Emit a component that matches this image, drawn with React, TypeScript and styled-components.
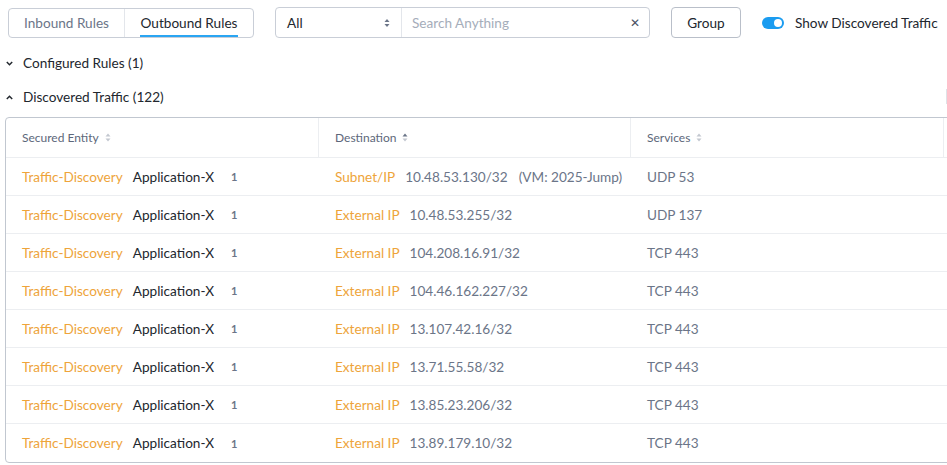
import React from "react";
import styled, { createGlobalStyle } from "styled-components";

const Global = createGlobalStyle`
  html, body { margin: 0; padding: 0; background: #fff; overflow: hidden; }
  body { font-family: Lato, "Open Sans", Arial, sans-serif; color: #22272e; }
  * { box-sizing: border-box; }
`;

const Page = styled.div`
  width: 1300px;
  padding: 7px 0 0 5px;
`;

const Toolbar = styled.div`
  display: flex;
  align-items: center;
  height: 31px;
  padding-left: 3px;
`;

const Tabs = styled.div`
  display: flex;
  height: 30px;
  margin-top: 1px;
  border: 1px solid #c9ced7;
  border-radius: 4px;
`;

const Tab = styled.div<{ $active?: boolean; $w: number }>`
  width: ${(p) => p.$w}px;
  display: flex;
  justify-content: center;
  align-items: center;
  font-size: 13.6px;
  color: ${(p) => (p.$active ? "#22272e" : "#6b7588")};
  border-left: ${(p) => (p.$active ? "1px solid #e3e6eb" : "none")};
  & > span {
    position: relative;
    height: 28px;
    line-height: 28px;
    padding: 0 1px;
  }
  & > span::after {
    content: "";
    display: ${(p) => (p.$active ? "block" : "none")};
    position: absolute;
    left: 0;
    right: 0;
    bottom: 0;
    height: 2px;
    background: #2aa5f2;
  }
`;

const SearchBox = styled.div`
  display: flex;
  margin-left: 21px;
  width: 375px;
  height: 31px;
  border: 1px solid #c9ced7;
  border-radius: 4px;
`;

const SelectPart = styled.div`
  width: 126px;
  display: flex;
  align-items: center;
  justify-content: space-between;
  padding: 0 11px 0 11px;
  font-size: 13.6px;
  color: #22272e;
  border-right: 1px solid #e3e6eb;
`;

const SearchPart = styled.div`
  flex: 1;
  display: flex;
  align-items: center;
  justify-content: space-between;
  padding: 0 9px 0 10px;
  font-size: 13.6px;
  color: #a5adba;
`;

const Clear = styled.span`
  font-size: 12px;
  color: #4a5263;
`;

const Button = styled.div`
  margin-left: 21px;
  width: 70px;
  height: 31px;
  border: 1px solid #b9bfc9;
  border-radius: 4px;
  display: flex;
  align-items: center;
  justify-content: center;
  font-size: 13.6px;
  color: #22272e;
`;

const ToggleWrap = styled.div`
  margin-left: 21px;
  display: flex;
  align-items: center;
  gap: 11px;
  font-size: 13.6px;
  color: #22272e;
`;

const Switch = styled.div`
  width: 22px;
  height: 12px;
  border-radius: 6px;
  background: #1b9cf0;
  position: relative;
  &::after {
    content: "";
    position: absolute;
    right: 2px;
    top: 2px;
    width: 8px;
    height: 8px;
    border-radius: 50%;
    background: #fff;
  }
`;

const SectionRow = styled.div<{ $first?: boolean }>`
  display: flex;
  justify-content: space-between;
  margin-top: ${(p) => (p.$first ? 8 : 0)}px;
  width: 942px;
`;

const Section = styled.div`
  display: flex;
  align-items: center;
  gap: 10px;
  height: 34px;
  font-size: 13.6px;
  color: #22272e;
`;

const EdgeMark = styled.div`
  width: 1px;
  height: 15px;
  margin-top: 9px;
  background: #dfe2e7;
`;

const Table = styled.div`
  margin-top: 3px;
  width: 1280px;
  border: 1px solid #c1c7d0;
  border-radius: 4px;
  overflow: hidden;
`;

const Row = styled.div<{ $head?: boolean }>`
  display: grid;
  grid-template-columns: 313px 312px 313px 1fr;
  height: ${(p) => (p.$head ? 40 : 38)}px;
  border-bottom: 1px solid #eceef1;
  &:last-child { border-bottom: none; }
`;

const HeadCell = styled.div`
  display: flex;
  align-items: center;
  gap: 6px;
  padding-left: 16px;
  font-size: 12px;
  color: #5d677a;
  border-right: 1px solid #eceef1;
`;

const Cell = styled.div`
  display: flex;
  align-items: center;
  padding-left: 16px;
  font-size: 13.6px;
  white-space: nowrap;
`;

const Orange = styled.span`
  color: #eea43a;
  margin-right: 10px;
`;

const Dark = styled.span`
  color: #22272e;
  margin-right: 17px;
`;

const Muted = styled.span<{ $gap?: number }>`
  color: #6b7588;
  margin-right: ${(p) => p.$gap ?? 0}px;
`;

const Count = styled.span`
  font-size: 11px;
  font-weight: 700;
  color: #6b7588;
`;

const Chevron = ({ up }: { up?: boolean }) => (
  <svg width="7" height="5" viewBox="0 0 7 5" style={{ marginLeft: 1 }}>
    <path
      d={up ? "M0.8 4 L3.5 1.3 L6.2 4" : "M0.8 1 L3.5 3.7 L6.2 1"}
      fill="none"
      stroke="#22272e"
      strokeWidth="1.5"
    />
  </svg>
);

const SortIcon = ({ active }: { active?: boolean }) => (
  <svg width="6" height="9" viewBox="0 0 6 9">
    <path d="M3 0.5 L5.5 3.5 L0.5 3.5 Z" fill={active ? "#6b7588" : "#c3c8d0"} />
    <path d="M3 8.5 L5.5 5.5 L0.5 5.5 Z" fill="#c3c8d0" />
  </svg>
);

const SelectArrows = () => (
  <svg width="6" height="10" viewBox="0 0 6 10">
    <path d="M3 1 L5.5 4 L0.5 4 Z" fill="#6b7588" />
    <path d="M3 9 L5.5 6 L0.5 6 Z" fill="#6b7588" />
  </svg>
);

const rows = [
  { type: "Subnet/IP", ip: "10.48.53.130/32", vm: "(VM: 2025-Jump)", svc: "UDP 53" },
  { type: "External IP", ip: "10.48.53.255/32", svc: "UDP 137" },
  { type: "External IP", ip: "104.208.16.91/32", svc: "TCP 443" },
  { type: "External IP", ip: "104.46.162.227/32", svc: "TCP 443" },
  { type: "External IP", ip: "13.107.42.16/32", svc: "TCP 443" },
  { type: "External IP", ip: "13.71.55.58/32", svc: "TCP 443" },
  { type: "External IP", ip: "13.85.23.206/32", svc: "TCP 443" },
  { type: "External IP", ip: "13.89.179.10/32", svc: "TCP 443" },
];

export default function App() {
  return (
    <>
      <Global />
      <Page>
        <Toolbar>
          <Tabs>
            <Tab $w={115}>
              <span>Inbound Rules</span>
            </Tab>
            <Tab $w={129} $active>
              <span>Outbound Rules</span>
            </Tab>
          </Tabs>
          <SearchBox>
            <SelectPart>
              All
              <SelectArrows />
            </SelectPart>
            <SearchPart>
              Search Anything
              <Clear>✕</Clear>
            </SearchPart>
          </SearchBox>
          <Button>Group</Button>
          <ToggleWrap>
            <Switch />
            Show Discovered Traffic
          </ToggleWrap>
        </Toolbar>
        <SectionRow $first>
          <Section>
            <Chevron />
            Configured Rules (1)
          </Section>
        </SectionRow>
        <SectionRow>
          <Section>
            <Chevron up />
            Discovered Traffic (122)
          </Section>
          <EdgeMark />
        </SectionRow>
        <Table>
          <Row $head>
            <HeadCell>
              Secured Entity <SortIcon />
            </HeadCell>
            <HeadCell>
              Destination <SortIcon active />
            </HeadCell>
            <HeadCell>
              Services <SortIcon />
            </HeadCell>
            <HeadCell />
          </Row>
          {rows.map((r, i) => (
            <Row key={i}>
              <Cell>
                <Orange>Traffic-Discovery</Orange>
                <Dark>Application-X</Dark>
                <Count>1</Count>
              </Cell>
              <Cell>
                <Orange>{r.type}</Orange>
                <Muted $gap={11}>{r.ip}</Muted>
                {r.vm && <Muted>{r.vm}</Muted>}
              </Cell>
              <Cell>
                <Muted>{r.svc}</Muted>
              </Cell>
              <Cell />
            </Row>
          ))}
        </Table>
      </Page>
    </>
  );
}
